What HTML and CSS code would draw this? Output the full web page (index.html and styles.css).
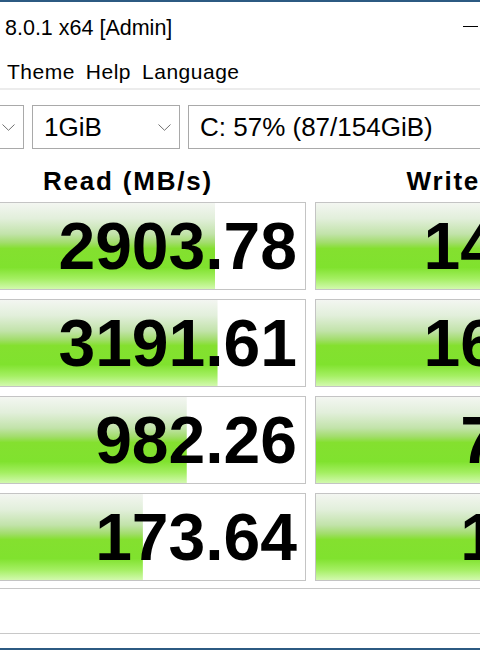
FILE: index.html
```html
<!DOCTYPE html>
<html lang="en">
<head>
  <title>CrystalDiskMark 8.0.1 x64 [Admin]</title>
  <meta charset="utf-8">
  <meta name="viewport" content="width=device-width, initial-scale=1">
  <link rel="stylesheet" href="styles.css">
</head>
<body>
  <div class="window">
    <!-- Title bar, the left part of the window is off screen -->
    <header class="titlebar">
      <span class="title">8.0.1 x64 [Admin]</span>
      <span class="minimize"></span>
    </header>

    <nav class="menubar">
      <span class="menu-item">Theme</span>
      <span class="menu-item">Help</span>
      <span class="menu-item">Language</span>
    </nav>

    <div class="panel">
      <div class="controls">
        <div class="combo combo-count">
          <span class="combo-value"></span>
          <svg class="chevron" viewBox="0 0 13 7"><polyline points="0.5,0.5 6.5,6.3 12.5,0.5"/></svg>
        </div>
        <div class="combo combo-size">
          <span class="combo-value">1GiB</span>
          <svg class="chevron" viewBox="0 0 13 7"><polyline points="0.5,0.5 6.5,6.3 12.5,0.5"/></svg>
        </div>
        <div class="combo combo-drive">
          <span class="combo-value">C: 57% (87/154GiB)</span>
        </div>
      </div>

      <div class="results">
        <div class="col-title">Read (MB/s)</div>
        <div class="col-title">Write (MB/s)</div>

        <div class="meter" style="--fill: 74.7%">2903.78</div>
        <div class="meter" style="--fill: 92%">1487.27</div>

        <div class="meter" style="--fill: 75.3%">3191.61</div>
        <div class="meter" style="--fill: 94%">1652.40</div>

        <div class="meter" style="--fill: 66.6%">982.26</div>
        <div class="meter" style="--fill: 88%">768.35</div>

        <div class="meter" style="--fill: 54.2%">173.64</div>
        <div class="meter" style="--fill: 86%">142.91</div>
      </div>

      <div class="comment"></div>
    </div>
  </div>
</body>
</html>
```

FILE: styles.css
```css
*, *::before, *::after {
  margin: 0;
  padding: 0;
  box-sizing: border-box;
}

html, body {
  width: 480px;
  height: 650px;
  overflow: hidden;
  background-color: #ffffff;
}

body {
  color: #000000;
  font-family: "Liberation Sans", Arial, sans-serif;
}

.window {
  height: 650px;
  border-top: 2px solid #2c5a82;
  border-bottom: 2px solid #2c5a82;
}

.titlebar {
  display: flex;
  align-items: center;
  justify-content: space-between;
  height: 53px;
  padding-left: 5px;
  padding-right: 2px;
}

.title {
  font-size: 21.5px;
  line-height: 1;
}

.minimize {
  width: 15px;
  height: 1px;
  margin-bottom: 4px;
  background-color: #000000;
}

.menubar {
  display: flex;
  align-items: center;
  gap: 11px;
  height: 35px;
  padding-left: 7px;
  border-bottom: 2px solid #ececec;
}

.menu-item {
  font-size: 21px;
  line-height: 1;
  letter-spacing: 0.5px;
}

.panel {
  margin-left: -50px;
  width: 780px;
}

.controls {
  display: flex;
  gap: 8px;
  padding-top: 15px;
}

.combo {
  display: flex;
  align-items: center;
  justify-content: space-between;
  height: 44px;
  border: 1px solid #a9a9a9;
  padding: 0 8px 0 11px;
  background-color: #ffffff;
}

.combo-count {
  width: 74px;
}

.combo-size {
  width: 148px;
}

.combo-drive {
  width: 500px;
}

.combo-value {
  font-size: 26px;
  line-height: 1;
}

.chevron {
  width: 13px;
  height: 7px;
  fill: none;
  stroke: #707070;
  stroke-width: 1;
}

.results {
  display: grid;
  grid-template-columns: 356px 356px;
  grid-template-rows: 44px repeat(4, 88px);
  column-gap: 9px;
  row-gap: 9px;
}

.col-title {
  padding-top: 17px;
  text-align: center;
  font-size: 26px;
  font-weight: 700;
  letter-spacing: 1.8px;
  line-height: 30px;
}

.meter {
  border: 1px solid #c4c4c4;
  padding-right: 8px;
  background-color: #ffffff;
  background-image: linear-gradient(to bottom,
    #f3f6f1 0%,
    #e2efdb 18%,
    #c2e3aa 36%,
    #a2dd6c 46%,
    #84e02f 53%,
    #80e22e 75%,
    #a4ef62 88%,
    #d2f9ae 100%);
  background-repeat: no-repeat;
  background-size: var(--fill) 100%;
  text-align: right;
  font-size: 66px;
  font-weight: 700;
  line-height: 86px;
}

.comment {
  height: 46px;
  margin-top: 7px;
  border-top: 1px solid #c8c8c8;
  border-bottom: 1px solid #c8c8c8;
}
```
